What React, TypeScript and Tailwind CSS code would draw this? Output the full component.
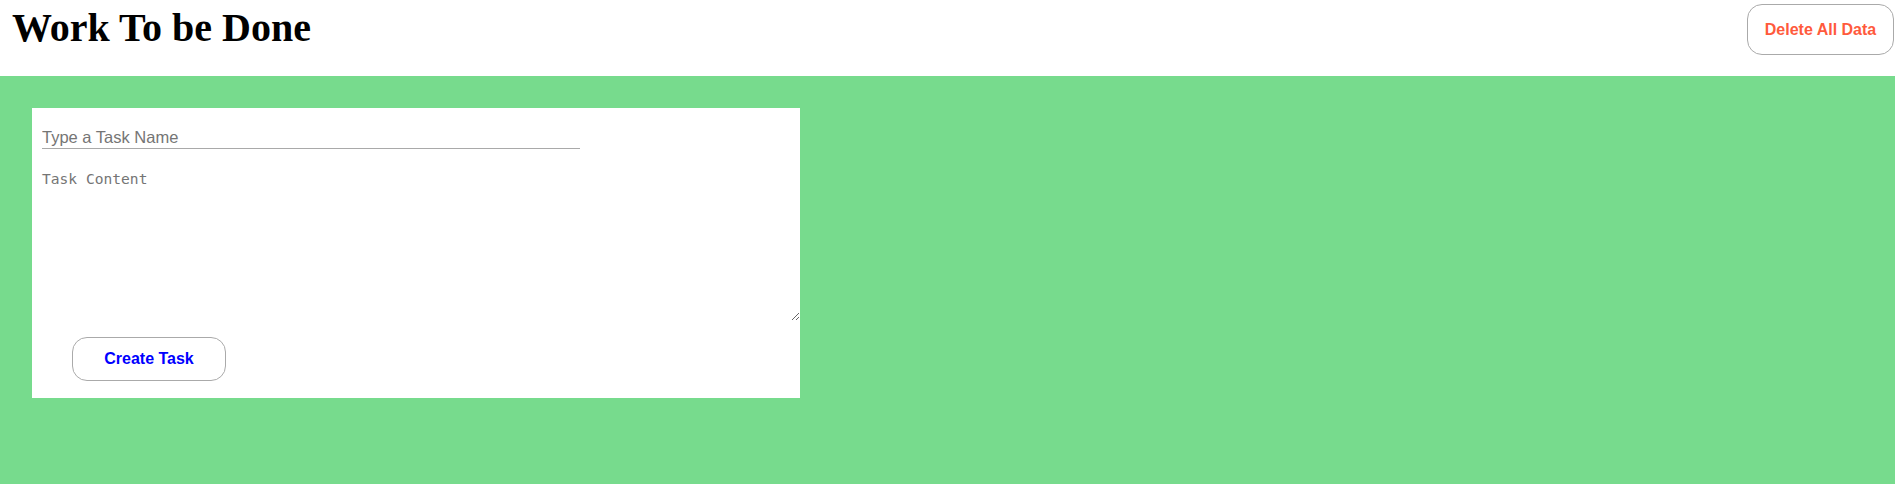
export default function App() {
  return (
    <div className="min-h-[484px] flex flex-col bg-[#77db8d] font-['Liberation_Sans',Arial,sans-serif]">
      <header className="h-[76px] bg-white flex items-start justify-between">
        <h1 className="pl-[12px] pt-[8px] font-['Liberation_Serif','Times_New_Roman',serif] text-[40px] leading-[40px] font-bold text-black">
          Work To be Done
        </h1>
        <button
          type="button"
          className="mt-[4px] mr-[1px] w-[147px] h-[51px] rounded-[15px] border border-[#aaaaaa] bg-white text-[16px] font-bold text-[#ff5a3c]"
        >
          Delete All Data
        </button>
      </header>

      <main className="flex-1 pl-[32px] pt-[32px]">
        <form
          className="flex w-[768px] flex-col items-start bg-white pb-[17px]"
          onSubmit={(e) => e.preventDefault()}
        >
          <input
            type="text"
            placeholder="Type a Task Name"
            className="ml-[10px] mt-[18px] h-[23px] w-[538px] border-b border-[#a9a9a9] bg-transparent text-[16.5px] text-black outline-none placeholder:text-[#757575]"
          />
          <textarea
            placeholder="Task Content"
            className="ml-[8px] mt-[17px] h-[155px] w-[760px] resize bg-transparent p-[2px] font-['DejaVu_Sans_Mono',monospace] text-[14.6px] text-black outline-none placeholder:text-[#757575]"
          />
          <button
            type="submit"
            className="ml-[40px] mt-[16px] h-[44px] w-[154px] rounded-[15px] border border-[#aaaaaa] bg-white text-[16px] font-bold text-[#0000ff]"
          >
            Create Task
          </button>
        </form>
      </main>
    </div>
  )
}
